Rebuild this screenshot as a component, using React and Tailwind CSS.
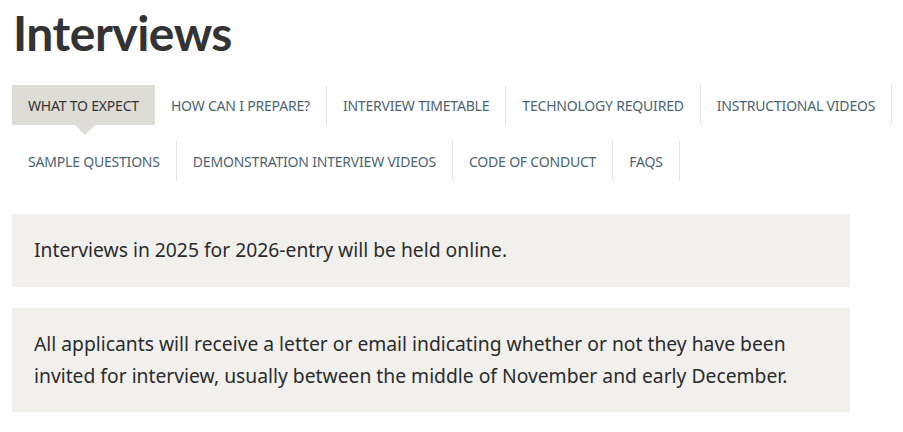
const tabs = [
  'WHAT TO EXPECT',
  'HOW CAN I PREPARE?',
  'INTERVIEW TIMETABLE',
  'TECHNOLOGY REQUIRED',
  'INSTRUCTIONAL VIDEOS',
  'SAMPLE QUESTIONS',
  'DEMONSTRATION INTERVIEW VIDEOS',
  'CODE OF CONDUCT',
  'FAQS',
]

export default function App() {
  return (
    <main className="w-[903px] h-[432px] bg-white overflow-hidden pl-3 pt-[4px]" style={{ fontFamily: '"Noto Sans", "Open Sans", sans-serif' }}>
      <h1
        className="text-[48px] leading-[58px] font-bold text-[#333333] pl-[1px] tracking-[-0.5px]"
        style={{ fontFamily: 'Lato, "Noto Sans", sans-serif' }}
      >
        Interviews
      </h1>

      <nav className="mt-[23px] flex flex-wrap gap-y-4 w-[890px]">
        {tabs.map((t, i) =>
          i === 0 ? (
            <div key={t} className="relative h-10 px-4 flex items-center bg-[#dddcd7] text-[#333333] text-[14px] tracking-[-0.2px]">
              {t}
              <span className="absolute left-[63px] top-10 w-0 h-0 border-l-[10px] border-r-[10px] border-t-[10px] border-l-transparent border-r-transparent border-t-[#dddcd7]" />
            </div>
          ) : (
            <div key={t} className="h-10 px-4 flex items-center border-r border-[#e4e4e1] text-[#4d6470] text-[14px] tracking-[-0.2px]">
              {t}
            </div>
          )
        )}
      </nav>

      <section className="mt-[33px] w-[838px] flex flex-col gap-[21px] text-[#2b2b2b] text-[19.3px]">
        <p className="bg-[#f1f0ed] px-[22px] py-5 leading-8 h-[73px]">
          Interviews in 2025 for 2026-entry will be held online.
        </p>
        <p className="bg-[#f1f0ed] px-[22px] py-5 leading-8">
          All applicants will receive a letter or email indicating whether or not they have been
          <br />
          invited for interview, usually between the middle of November and early December.
        </p>
      </section>
    </main>
  )
}
